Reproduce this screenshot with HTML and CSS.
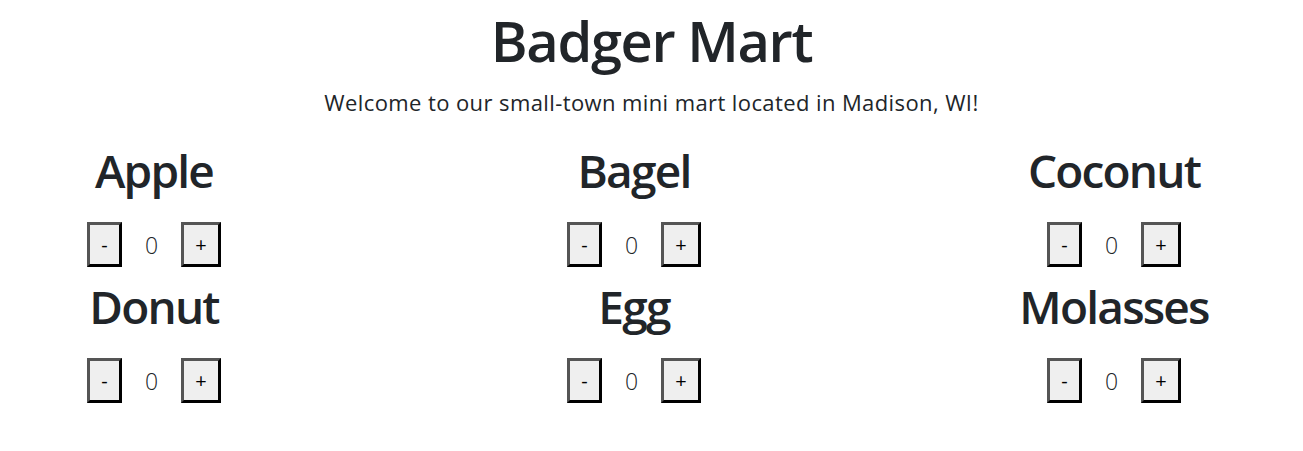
FILE: index.html
```html
<!DOCTYPE html>
<html lang="en">
<head>
<meta charset="utf-8">
<title>Badger Mart</title>
<link rel="stylesheet" href="styles.css">
</head>
<body>
<header class="intro">
  <h1 class="title">Badger Mart</h1>
  <p class="lead">Welcome to our small-town mini mart located in Madison, WI!</p>
</header>
<main class="items">
  <section class="item">
    <h2 class="item-name">Apple</h2>
    <div class="counter"><button class="btn btn-minus">-</button><span class="count">0</span><button class="btn btn-plus">+</button></div>
  </section>
  <section class="item">
    <h2 class="item-name">Bagel</h2>
    <div class="counter"><button class="btn btn-minus">-</button><span class="count">0</span><button class="btn btn-plus">+</button></div>
  </section>
  <section class="item">
    <h2 class="item-name">Coconut</h2>
    <div class="counter"><button class="btn btn-minus">-</button><span class="count">0</span><button class="btn btn-plus">+</button></div>
  </section>
  <section class="item">
    <h2 class="item-name">Donut</h2>
    <div class="counter"><button class="btn btn-minus">-</button><span class="count">0</span><button class="btn btn-plus">+</button></div>
  </section>
  <section class="item">
    <h2 class="item-name">Egg</h2>
    <div class="counter"><button class="btn btn-minus">-</button><span class="count">0</span><button class="btn btn-plus">+</button></div>
  </section>
  <section class="item">
    <h2 class="item-name">Molasses</h2>
    <div class="counter"><button class="btn btn-minus">-</button><span class="count">0</span><button class="btn btn-plus">+</button></div>
  </section>
</main>
</body>
</html>
```
FILE: styles.css
```css
html, body {
  margin: 0;
  padding: 0;
  background: #fff;
}
body {
  font-family: "Open Sans", "Noto Sans", sans-serif;
  color: #212529;
}
.intro {
  text-align: center;
}
.title {
  margin: 0;
  padding-top: 6px;
  font-size: 56px;
  font-weight: 600;
  line-height: 68px;
  letter-spacing: -1.4px;
}
.lead {
  margin: 12px 0 0;
  font-size: 22px;
  font-weight: 400;
  line-height: 32px;
  letter-spacing: 0.4px;
}
.items {
  display: grid;
  grid-template-columns: repeat(3, 308px);
  column-gap: 172px;
  margin-top: 24px;
}
.item {
  display: flex;
  flex-direction: column;
  align-items: center;
}
.item-name {
  margin: 0;
  font-size: 46px;
  font-weight: 600;
  line-height: 56px;
  letter-spacing: -1.8px;
}
.counter {
  display: flex;
  align-items: center;
  margin-top: 24px;
  margin-bottom: 11px;
}
.btn {
  box-sizing: border-box;
  height: 45px;
  padding: 0;
  background: #efefef;
  border: 3px solid;
  border-color: #555 #000 #000 #555;
  font-family: "Open Sans", sans-serif;
  font-size: 20px;
  font-weight: 400;
  line-height: 1;
  color: #000;
}
.btn-minus { width: 35px; }
.btn-plus { width: 40px; }
.count {
  width: 59px;
  text-align: center;
  font-size: 23px;
  font-weight: 300;
}
```
